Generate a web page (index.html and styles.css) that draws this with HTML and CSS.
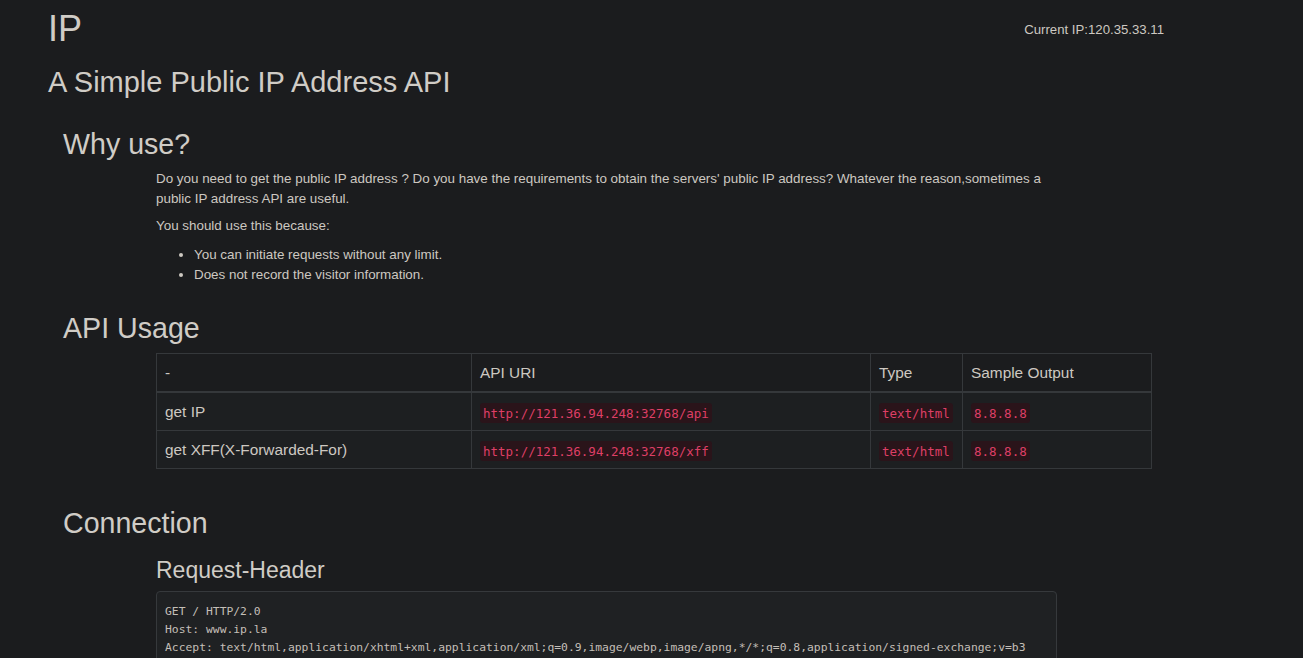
FILE: index.html
```html
<!DOCTYPE html>
<html lang="en">
<head>
<meta charset="utf-8">
<title>IP</title>
<link rel="stylesheet" href="styles.css">
</head>
<body>
<div class="page">
  <header class="top">
    <h1 class="brand">IP</h1>
    <div class="current-ip">Current IP:120.35.33.11</div>
  </header>
  <h2 class="subtitle">A Simple Public IP Address API</h2>

  <section class="section section-why">
    <h2 class="section-title">Why use?</h2>
    <div class="section-body">
      <p class="text">Do you need to get the public IP address ? Do you have the requirements to obtain the servers' public IP address? Whatever the reason,sometimes a public IP address API are useful.</p>
      <p class="text text-second">You should use this because:</p>
      <ul class="reasons">
        <li>You can initiate requests without any limit.</li>
        <li>Does not record the visitor information.</li>
      </ul>
    </div>
  </section>

  <section class="section section-api">
    <h2 class="section-title">API Usage</h2>
    <div class="section-body">
      <table class="api-table">
        <thead>
          <tr>
            <th class="c1">-</th>
            <th class="c2">API URI</th>
            <th class="c3">Type</th>
            <th class="c4">Sample Output</th>
          </tr>
        </thead>
        <tbody>
          <tr>
            <td>get IP</td>
            <td><code>http://121.36.94.248:32768/api</code></td>
            <td><code>text/html</code></td>
            <td><code>8.8.8.8</code></td>
          </tr>
          <tr>
            <td>get XFF(X-Forwarded-For)</td>
            <td><code>http://121.36.94.248:32768/xff</code></td>
            <td><code>text/html</code></td>
            <td><code>8.8.8.8</code></td>
          </tr>
        </tbody>
      </table>
    </div>
  </section>

  <section class="section section-conn">
    <h2 class="section-title">Connection</h2>
    <div class="section-body">
      <h3 class="sub-title">Request-Header</h3>
<pre class="headers">GET / HTTP/2.0
Host: www.ip.la
Accept: text/html,application/xhtml+xml,application/xml;q=0.9,image/webp,image/apng,*/*;q=0.8,application/signed-exchange;v=b3</pre>
    </div>
  </section>
</div>
</body>
</html>
```
FILE: styles.css
```css
html, body {
  margin: 0;
  padding: 0;
  background: #1b1c1e;
}
body {
  color: #cdc8c1;
  font-family: "Liberation Sans", Arial, sans-serif;
  font-size: 13.4px;
  line-height: 20px;
}
.page {
  padding-left: 48px;
}
.top {
  width: 1116px;
  display: flex;
  justify-content: space-between;
  align-items: flex-start;
  padding-top: 9px;
}
.brand {
  margin: 0;
  font-size: 36px;
  line-height: 1.1;
  font-weight: 400;
  color: #d0ccc6;
}
.current-ip {
  margin-top: 11.5px;
  font-size: 13.2px;
  line-height: 18px;
  color: #cdc8c1;
}
.subtitle {
  margin: 18.5px 0 0;
  font-size: 29px;
  line-height: 1.1;
  font-weight: 400;
  color: #d0ccc6;
}
.section {
  padding-left: 15px;
}
.section-title {
  margin: 0;
  font-size: 28.6px;
  line-height: 1.1;
  font-weight: 400;
  color: #d0ccc6;
}
.section-body {
  margin-left: 93px;
}
.section-why {
  margin-top: 30.5px;
}
.section-why .section-body {
  padding-top: 8.5px;
}
.text {
  margin: 0;
  max-width: 901px;
  line-height: 19.5px;
}
.text-second {
  margin-top: 8px;
}
.reasons {
  margin: 9px 0 0;
  padding-left: 38px;
}
.section-api {
  margin-top: 28.5px;
}
.section-api .section-body {
  padding-top: 8.5px;
}
.api-table {
  width: 995px;
  table-layout: fixed;
  border-collapse: collapse;
  border: 1px solid #35383b;
  font-size: 15.4px;
}
.api-table th,
.api-table td {
  box-sizing: border-box;
  text-align: left;
  font-weight: 400;
  padding: 8px 8px;
  border: 1px solid #35383b;
  white-space: nowrap;
  line-height: 21px;
}
.api-table .c1 { width: 315px; }
.api-table .c2 { width: 399px; }
.api-table .c3 { width: 92px; }
.api-table .c4 { width: 189px; }
.api-table thead th {
  border-bottom-width: 2px;
}
.api-table tbody tr {
  background: #1d1f21;
}
code {
  font-family: "DejaVu Sans Mono", "Liberation Mono", monospace;
  font-size: 12.5px;
  line-height: 1;
  color: #de3f66;
  background: #2a141a;
  padding: 2.5px 3px;
  border-radius: 3px;
}
.section-conn {
  margin-top: 38.6px;
}
.sub-title {
  margin: 18.6px 0 0;
  font-size: 23px;
  line-height: 1.1;
  font-weight: 400;
  color: #d0ccc6;
}
.headers {
  margin: 8px 0 0;
  width: 883px;
  padding: 10px 8px 9px;
  background: #1f2123;
  border: 1px solid #36393c;
  border-radius: 4px;
  font-family: "DejaVu Sans Mono", "Liberation Mono", monospace;
  font-size: 11.35px;
  line-height: 18px;
  color: #c4bfb8;
  white-space: pre;
  overflow: hidden;
}
```
